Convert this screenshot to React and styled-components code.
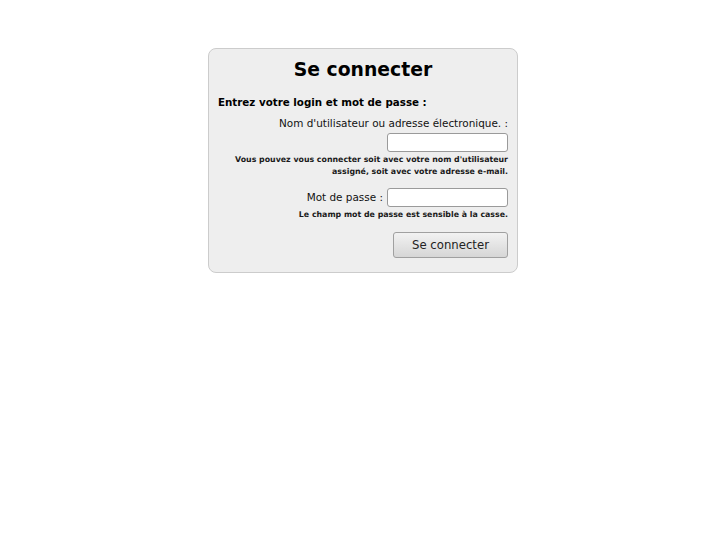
import React from "react";
import styled, { createGlobalStyle } from "styled-components";

const Global = createGlobalStyle`
  html, body { margin: 0; padding: 0; background: #fff; }
  body { font-family: "DejaVu Sans", sans-serif; color: #000; }
`;

const Page = styled.div`
  display: flex;
  justify-content: center;
  padding-top: 48px;
  padding-right: 1px;
`;

const Box = styled.form`
  box-sizing: border-box;
  width: 310px;
  height: 225px;
  background: #eeeeee;
  border: 1px solid #cccccc;
  border-radius: 8px;
  padding: 9px 9px 0 9px;
  display: flex;
  flex-direction: column;
`;

const Title = styled.h1`
  margin: 0;
  font-size: 18.8px;
  font-weight: bold;
  text-align: center;
  line-height: 24px;
`;

const Intro = styled.div`
  margin-top: 13px;
  font-size: 10.3px;
  font-weight: bold;
  line-height: 14px;
`;

const Field = styled.div`
  display: flex;
  flex-direction: ${(p) => (p.$inline ? "row" : "column")};
  align-items: ${(p) => (p.$inline ? "center" : "flex-end")};
  justify-content: flex-end;
  gap: ${(p) => (p.$inline ? "4px" : "3px")};
  margin-top: ${(p) => p.$top}px;
`;

const Label = styled.label`
  font-size: 10.45px;
  line-height: 13px;
  text-align: right;
  color: #111;
`;

const Input = styled.input`
  box-sizing: border-box;
  width: 121px;
  height: 19px;
  margin: 0;
  border: 1px solid #9a9a9a;
  border-radius: 3px;
  background: #fff;
  padding: 1px 3px;
  font-family: "DejaVu Sans", sans-serif;
  font-size: 11px;
`;

const Hint = styled.div`
  margin-top: ${(p) => p.$top}px;
  font-size: 7.85px;
  font-weight: bold;
  line-height: 12px;
  text-align: right;
  color: #1a1a1a;
`;

const Actions = styled.div`
  display: flex;
  justify-content: flex-end;
  margin-top: 11px;
`;

const Button = styled.button`
  box-sizing: border-box;
  width: 115px;
  height: 26px;
  border: 1px solid #a0a0a0;
  border-radius: 3px;
  background: linear-gradient(#f2f2f2, #d6d6d6);
  font-family: "DejaVu Sans", sans-serif;
  font-size: 11.7px;
  color: #222;
  padding: 0;
`;

export default function App() {
  return (
    <>
      <Global />
      <Page>
        <Box onSubmit={(e) => e.preventDefault()}>
          <Title>Se connecter</Title>
          <Intro>Entrez votre login et mot de passe :</Intro>
          <Field $top={8}>
            <Label htmlFor="user">Nom d'utilisateur ou adresse électronique. :</Label>
            <Input id="user" type="text" />
          </Field>
          <Hint $top={2}>
            Vous pouvez vous connecter soit avec votre nom d'utilisateur
            <br />
            assigné, soit avec votre adresse e-mail.
          </Hint>
          <Field $inline $top={10}>
            <Label htmlFor="pass">Mot de passe :</Label>
            <Input id="pass" type="password" />
          </Field>
          <Hint $top={2}>Le champ mot de passe est sensible à la casse.</Hint>
          <Actions>
            <Button type="submit">Se connecter</Button>
          </Actions>
        </Box>
      </Page>
    </>
  );
}
